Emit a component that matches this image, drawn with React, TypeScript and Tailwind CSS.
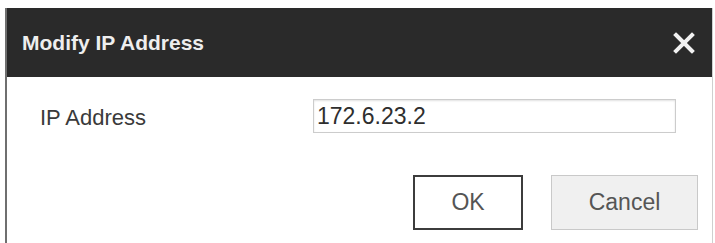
import React from "react";

export default function App() {
  return (
    <div
      className="w-[715px] h-[243px] bg-white pt-[8px] pl-[5px] overflow-hidden"
      style={{ fontFamily: '"Liberation Sans", Arial, sans-serif' }}
    >
      <div className="w-[708px] h-[235px] border-l-2 border-l-[#6f6f6f] border-r border-r-[#cfcfcf] bg-white">
        <div className="h-[69px] bg-[#2a2a2a] flex items-center justify-between pl-[15px] pr-[17px]">
          <span className="text-[21px] font-bold text-[#eeeeee]">Modify IP Address</span>
          <svg width="22" height="22" viewBox="0 0 22 22" className="mt-[1px]">
            <path d="M3 3 L19 19 M19 3 L3 19" stroke="#f2f2f2" strokeWidth="4" strokeLinecap="square" />
          </svg>
        </div>
        <div className="pt-[22px]">
          <div className="flex items-center h-[34px]">
            <span className="pl-[33px] w-[306px] text-[22px] text-[#3a3a3a] mt-[2px]">IP Address</span>
            <div className="w-[363px] h-[34px] border border-[#cccccc] shadow-[inset_0_1px_2px_rgba(0,0,0,0.12)] flex items-center pl-[3px] text-[23px] text-[#2e2e2e]">
              172.6.23.2
            </div>
          </div>
          <div className="flex justify-end gap-[28px] pr-[14px] mt-[42px]">
            <div className="w-[110px] h-[55px] border-2 border-[#3c3c3c] bg-white flex items-center justify-center text-[23px] text-[#555555]">
              OK
            </div>
            <div className="w-[147px] h-[55px] border border-[#c9c9c9] bg-[#f0f0f0] flex items-center justify-center text-[23px] text-[#555555]">
              Cancel
            </div>
          </div>
        </div>
      </div>
    </div>
  );
}
